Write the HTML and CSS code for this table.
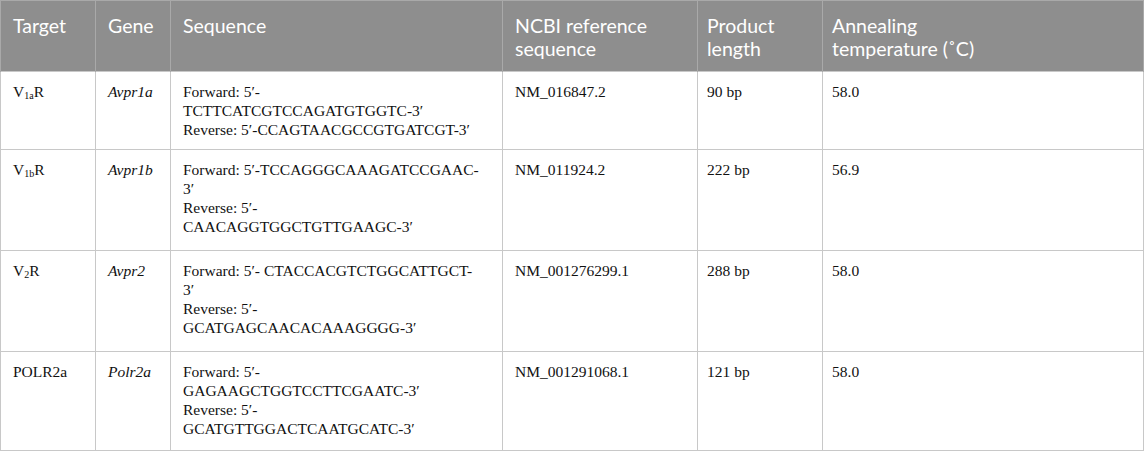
FILE: index.html
```html
<!DOCTYPE html>
<html>
<head>
<meta charset="utf-8">
<link rel="stylesheet" href="styles.css">
</head>
<body>
<table class="primers">
  <colgroup>
    <col class="c-target">
    <col class="c-gene">
    <col class="c-seq">
    <col class="c-ncbi">
    <col class="c-len">
    <col class="c-temp">
  </colgroup>
  <thead>
    <tr>
      <th>Target</th>
      <th>Gene</th>
      <th>Sequence</th>
      <th>NCBI reference<br>sequence</th>
      <th class="narrow">Product<br>length</th>
      <th class="narrow">Annealing<br>temperature (˚C)</th>
    </tr>
  </thead>
  <tbody>
    <tr class="r1">
      <td>V<sub>1a</sub>R</td>
      <td class="gene">Avpr1a</td>
      <td><span class="ln">Forward: 5′-</span><span class="ln">TCTTCATCGTCCAGATGTGGTC-3′</span><span class="ln">Reverse: 5′-CCAGTAACGCCGTGATCGT-3′</span></td>
      <td>NM_016847.2</td>
      <td class="narrow">90 bp</td>
      <td class="narrow">58.0</td>
    </tr>
    <tr class="r2">
      <td>V<sub>1b</sub>R</td>
      <td class="gene">Avpr1b</td>
      <td><span class="ln">Forward: 5′-TCCAGGGCAAAGATCCGAAC-</span><span class="ln">3′</span><span class="ln">Reverse: 5′-</span><span class="ln">CAACAGGTGGCTGTTGAAGC-3′</span></td>
      <td>NM_011924.2</td>
      <td class="narrow">222 bp</td>
      <td class="narrow">56.9</td>
    </tr>
    <tr class="r3">
      <td>V<sub>2</sub>R</td>
      <td class="gene">Avpr2</td>
      <td><span class="ln">Forward: 5′- CTACCACGTCTGGCATTGCT-</span><span class="ln">3′</span><span class="ln">Reverse: 5′-</span><span class="ln">GCATGAGCAACACAAAGGGG-3′</span></td>
      <td>NM_001276299.1</td>
      <td class="narrow">288 bp</td>
      <td class="narrow">58.0</td>
    </tr>
    <tr class="r4">
      <td>POLR2a</td>
      <td class="gene">Polr2a</td>
      <td><span class="ln">Forward: 5′-</span><span class="ln">GAGAAGCTGGTCCTTCGAATC-3′</span><span class="ln">Reverse: 5′-</span><span class="ln">GCATGTTGGACTCAATGCATC-3′</span></td>
      <td>NM_001291068.1</td>
      <td class="narrow">121 bp</td>
      <td class="narrow">58.0</td>
    </tr>
  </tbody>
</table>
</body>
</html>
```
FILE: styles.css
```css
html, body {
  margin: 0;
  padding: 0;
  background: #ffffff;
}

.primers {
  border-collapse: collapse;
  table-layout: fixed;
  width: 1143px;
}

.c-target { width: 95px; }
.c-gene { width: 75px; }
.c-seq { width: 332px; }
.c-ncbi { width: 195px; }
.c-len { width: 125px; }
.c-temp { width: 321px; }

.primers th {
  background: #8e8e8e;
  color: #ffffff;
  font-family: Lato, "Noto Sans", sans-serif;
  font-weight: 400;
  font-size: 19.5px;
  line-height: 23px;
  text-align: left;
  vertical-align: top;
  padding: 13px 12px 11px 12px;
  border-left: 1px solid #a9a9a9;
  border-right: 1px solid #a9a9a9;
  border-top: 1px solid #a9a9a9;
  height: 46px;
}

.primers td {
  font-family: "Liberation Serif", "Times New Roman", serif;
  font-size: 15.5px;
  line-height: 19px;
  color: #111111;
  text-align: left;
  vertical-align: top;
  padding: 10px 12px 10px 12px;
  border: 1px solid #c8c8c8;
}

.primers th.narrow,
.primers td.narrow {
  padding-left: 9px;
}

.primers td.gene {
  font-style: italic;
}

.primers sub {
  font-size: 10px;
  line-height: 0;
  vertical-align: -2px;
}

.ln {
  display: block;
  white-space: nowrap;
}

.r1 { height: 78px; }
.r2 { height: 101px; }
.r3 { height: 101px; }
.r4 { height: 99px; }
```
